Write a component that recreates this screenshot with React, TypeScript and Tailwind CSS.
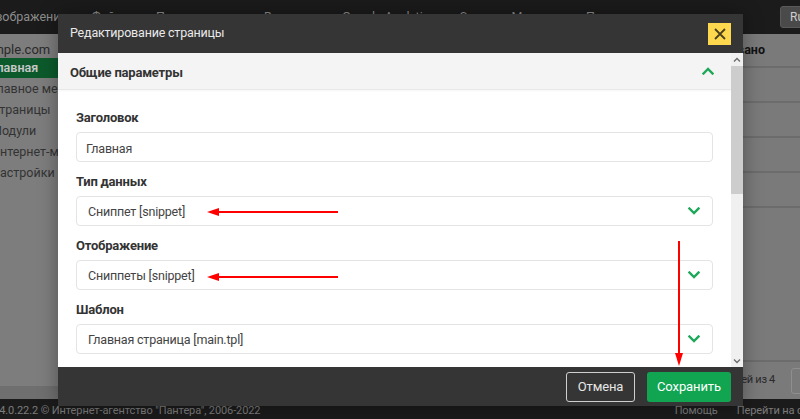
import React from "react";

const Chevron = ({ up = false }: { up?: boolean }) => (
  <svg width="12" height="8" viewBox="0 0 12 8" className="shrink-0">
    <polyline
      points={up ? "1.5,6.5 6,2 10.5,6.5" : "1.5,1.5 6,6 10.5,1.5"}
      fill="none"
      stroke="#1fa85a"
      strokeWidth="2.4"
      strokeLinecap="square"
    />
  </svg>
);

const SmallArrow = ({ up = false }: { up?: boolean }) => (
  <svg width="8" height="6" viewBox="0 0 8 6">
    <polyline
      points={up ? "1,4.5 4,1.5 7,4.5" : "1,1.5 4,4.5 7,1.5"}
      fill="none"
      stroke="#6a6a6a"
      strokeWidth="1.3"
    />
  </svg>
);

const Field = ({
  label,
  value,
  select = false,
  first = false,
}: {
  label: string;
  value: string;
  select?: boolean;
  first?: boolean;
}) => (
  <div className={first ? "" : "mt-[10px]"}>
    <div className="h-[20px] leading-[20px] text-[13px] tracking-[-0.2px] font-bold text-[#333]">{label}</div>
    <div
      className={`mt-[4px] h-[30px] rounded-[4px] border-[1.5px] border-[#e4e4e4] bg-white flex items-center ${
        select ? "pl-[11px] pr-[12px]" : "px-[9px]"
      }`}
    >
      <span
        className={`text-[12.5px] tracking-[-0.2px] leading-[16px] text-[#444] flex-1 ${
          select ? "pt-[1px]" : "pt-[3px]"
        }`}
      >
        {value}
      </span>
      {select && <Chevron />}
    </div>
  </div>
);

export default function App() {
  const nav = ["Изображения", "Файлы", "Пользователи", "Виджеты", "Google Analytics", "Sape", "Магазин", "Помощь"];
  const side = ["Главное меню", "Страницы", "Модули", "Интернет-магазин", "Настройки"];
  return (
    <div className="relative w-[800px] h-[419px] overflow-hidden bg-[#7a7a7a] font-['Roboto',sans-serif]">
      <div className="flex flex-col h-full">
        {/* top bar */}
        <header className="h-[34px] shrink-0 bg-[#1b1b1b] flex items-center">
          <nav className="flex items-center gap-[24px] ml-[-13px] text-[12.5px] text-[#8d8d8d] whitespace-nowrap">
            {nav.map((n) => (
              <span key={n}>{n}</span>
            ))}
          </nav>
          <div className="ml-auto mr-[-20px] h-[22px] w-[40px] rounded-[3px] bg-[#4a4a4a] border border-[#5a5a5a] text-[12px] text-[#cfcfcf] pl-[9px] leading-[20px]">
            Ru
          </div>
        </header>

        <div className="flex flex-1 min-h-0">
          {/* sidebar */}
          <aside className="w-[170px] shrink-0 bg-[#7d7d7d] flex flex-col">
            <div className="h-[24px] pt-[7px] leading-[18px] ml-[-28px] text-[13px] text-[#2a2a2a] whitespace-nowrap">
              example.com
            </div>
            <div className="h-[20px] bg-[#0c5a2c] flex items-center">
              <span className="ml-[-9px] text-[12.5px] font-semibold text-[#c8c8c8]">Главная</span>
            </div>
            <div className="flex flex-col pt-[1px]">
              {side.map((s) => (
                <div key={s} className="h-[21px] flex items-center ml-[-9px] text-[12.5px] text-[#333] whitespace-nowrap">
                  {s}
                </div>
              ))}
            </div>
            <div className="flex-1" />
            <div className="h-[13px] bg-[#6f6f6f]" />
          </aside>

          {/* main */}
          <main className="flex-1 flex flex-col">
            <div className="h-[34px] flex items-center justify-end pr-[35px] border-b-[2px] border-[#6c6c6c]">
              <span className="text-[12.5px] font-bold text-[#111]">Опубликовано</span>
            </div>
            {[0, 1, 2, 3].map((i) => (
              <div key={i} className="h-[35px] border-b-[2px] border-[#6c6c6c]" />
            ))}
            <div className="flex-1" />
            <div className="h-[39px] border-t-[2px] border-[#6c6c6c] flex items-center justify-end">
              <span className="text-[11px] tracking-[-0.3px] text-[#2a2a2a] mr-[16px]">Показано записей из 4</span>
              <div className="w-[20px] h-[26px] border border-[#8e8e8e] rounded-l-[3px] mr-[-11px]" />
            </div>
          </main>
        </div>

        {/* footer */}
        <footer className="h-[20px] shrink-0 bg-[#1b1b1b] flex items-center pt-[4px] text-[11px] tracking-[-0.1px] text-[#7b7b7b] whitespace-nowrap">
          <span className="ml-[-6px]">v4.0.22.2 © Интернет-агентство "Пантера", 2006-2022</span>
          <span className="ml-auto">Помощь</span>
          <span className="ml-[19px] mr-[-20px]">Перейти на сайт</span>
        </footer>
      </div>

      {/* modal */}
      <div className="absolute left-[58px] top-[14px] w-[685px] h-[392px] flex flex-col shadow-[0_0_18px_rgba(0,0,0,0.35)]">
        <div className="h-[39px] shrink-0 bg-[#353535] flex items-center pl-[12px] pr-[12px]">
          <span className="text-[12.5px] tracking-[-0.2px] text-[#e9e9e9]">Редактирование страницы</span>
          <div className="ml-auto w-[23px] h-[22px] bg-[#fdd84e] flex items-center justify-center">
            <svg width="12" height="12" viewBox="0 0 12 12">
              <path d="M1 1 L11 11 M11 1 L1 11" stroke="#4b3f1c" strokeWidth="1.8" />
            </svg>
          </div>
        </div>

        <div className="flex-1 min-h-0 flex bg-white">
          <div className="flex-1 min-w-0 flex flex-col overflow-hidden">
            <div className="h-[37px] shrink-0 bg-[#f4f4f4] border-b border-[#e8e8e8] shadow-[0_1px_2px_rgba(0,0,0,0.04)] flex items-center pl-[12px] pr-[17px]">
              <span className="text-[13px] tracking-[-0.2px] font-bold text-[#333] flex-1 pt-[3px]">Общие параметры</span>
              <Chevron up />
            </div>
            <div className="px-[18px] pt-[18px]">
              <Field first label="Заголовок" value="Главная" />
              <Field select label="Тип данных" value="Сниппет [snippet]" />
              <Field select label="Отображение" value="Сниппеты [snippet]" />
              <Field select label="Шаблон" value="Главная страница [main.tpl]" />
            </div>
          </div>
          {/* scrollbar */}
          <div className="w-[12px] shrink-0 bg-[#f0f0f0] flex flex-col items-center">
            <div className="h-[13px] flex items-center justify-center">
              <SmallArrow up />
            </div>
            <div className="w-[12px] h-[128px] bg-[#cdcdcd]" />
            <div className="flex-1" />
            <div className="h-[13px] flex items-center justify-center">
              <SmallArrow />
            </div>
          </div>
        </div>

        <div className="h-[39px] shrink-0 bg-[#353535] flex items-center justify-end gap-[12px] pr-[12px]">
          <button className="h-[30px] w-[69px] rounded-[3px] border border-[#cfcfcf] text-[13px] tracking-[-0.1px] text-[#e6e6e6]">
            Отмена
          </button>
          <button className="h-[30px] w-[84px] rounded-[3px] bg-[#11a552] text-[13px] tracking-[-0.1px] text-white">
            Сохранить
          </button>
        </div>
      </div>

      {/* annotation arrows */}
      <svg className="absolute inset-0 pointer-events-none" width="800" height="419">
        <g stroke="#ff0000" strokeWidth="2" fill="#ff0000">
          <line x1="338" y1="212" x2="216" y2="212" />
          <polygon points="207,212 219,208 219,216" stroke="none" />
          <line x1="338" y1="277" x2="216" y2="277" />
          <polygon points="207,277 219,273 219,281" stroke="none" />
          <line x1="679" y1="241" x2="679" y2="355" />
          <polygon points="679,366 675,353 683,353" stroke="none" />
        </g>
      </svg>
    </div>
  );
}
